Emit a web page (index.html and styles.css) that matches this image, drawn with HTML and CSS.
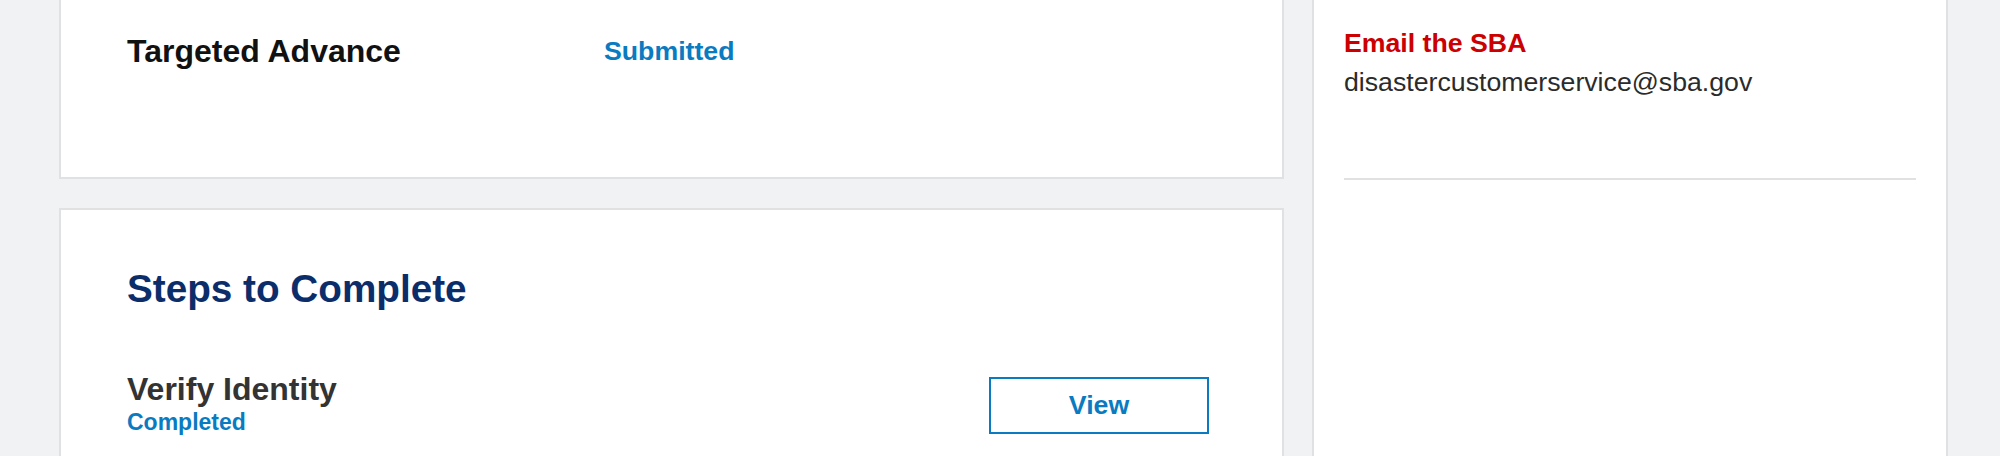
FILE: index.html
```html
<!DOCTYPE html>
<html lang="en">
<head>
<meta charset="UTF-8" />
<meta name="viewport" content="width=device-width, initial-scale=1" />
<title>SBA — Application Status</title>
<link rel="stylesheet" href="styles.css">
</head>
<body>

<div class="page">
  <main class="main-col">
    <section class="card card-status">
      <div class="status-row">
        <span class="program-name">Targeted Advance</span>
        <span class="status-label">Submitted</span>
      </div>
    </section>

    <section class="card card-steps">
      <h2 class="steps-title">Steps to Complete</h2>
      <div class="step-row">
        <div class="step-info">
          <div class="step-name">Verify Identity</div>
          <div class="step-state">Completed</div>
        </div>
        <button class="btn-outline" type="button">View</button>
      </div>
    </section>
  </main>

  <aside class="side-col">
    <div class="contact-block">
      <div class="contact-title">Email the SBA</div>
      <a class="contact-link" href="mailto:disastercustomerservice@sba.gov">disastercustomerservice@sba.gov</a>
    </div>
    <hr class="side-divider" />
  </aside>
</div>

</body>
</html>
```

FILE: styles.css
```css
body {
  margin: 0;
  background: #f1f2f3;
  font-family: "Liberation Sans", Arial, Helvetica, sans-serif;
  color: #2b2b2b;
}
.page {
  display: grid;
  grid-template-columns: 1225px 636px;
  column-gap: 28px;
  padding-left: 59px;
  min-height: 456px;
}
.main-col {
  display: flex;
  flex-direction: column;
  gap: 29px;
}
.card {
  background: #fff;
  border: 2px solid #dfe1e2;
}
.card-status {
  border-top: 0;
  padding: 32px 73px 107px 66px;
}
.status-row {
  display: grid;
  grid-template-columns: 477px 1fr;
  align-items: center;
  height: 38px;
}
.program-name {
  font-size: 32px;
  font-weight: 700;
  color: #111;
}
.status-label {
  font-size: 26.7px;
  font-weight: 700;
  color: #0a7bc1;
}
.card-steps {
  flex: 1;
  padding: 56px 73px 80px 66px;
}
.steps-title {
  margin: 0;
  font-size: 38.7px;
  line-height: 46px;
  font-weight: 700;
  color: #0b2e6b;
}
.step-row {
  display: flex;
  align-items: center;
  justify-content: space-between;
  margin-top: 58px;
}
.step-name {
  font-size: 32px;
  line-height: 39px;
  font-weight: 700;
  color: #333;
}
.step-state {
  font-size: 23px;
  line-height: 27px;
  font-weight: 700;
  color: #0a7bc1;
}
.btn-outline {
  width: 220px;
  height: 57px;
  margin-top: 4px;
  background: #fff;
  border: 2px solid #0a7bc1;
  border-radius: 0;
  color: #0a7bc1;
  font-family: inherit;
  font-size: 26.7px;
  font-weight: 700;
  cursor: pointer;
}
.btn-outline:hover {
  background: #f0f7fc;
}
.side-col {
  background: #fff;
  border-left: 2px solid #dfe1e2;
  border-right: 2px solid #dfe1e2;
  padding: 27px 30px 0;
}
.contact-title {
  font-size: 26.7px;
  line-height: 32px;
  font-weight: 700;
  color: #cc0000;
}
.contact-link {
  display: block;
  margin-top: 7px;
  font-size: 26.7px;
  line-height: 32px;
  color: #2b2b2b;
  text-decoration: none;
}
.side-divider {
  margin: 80px 0 0;
  border: 0;
  border-top: 2px solid #dfe1e2;
}
```
